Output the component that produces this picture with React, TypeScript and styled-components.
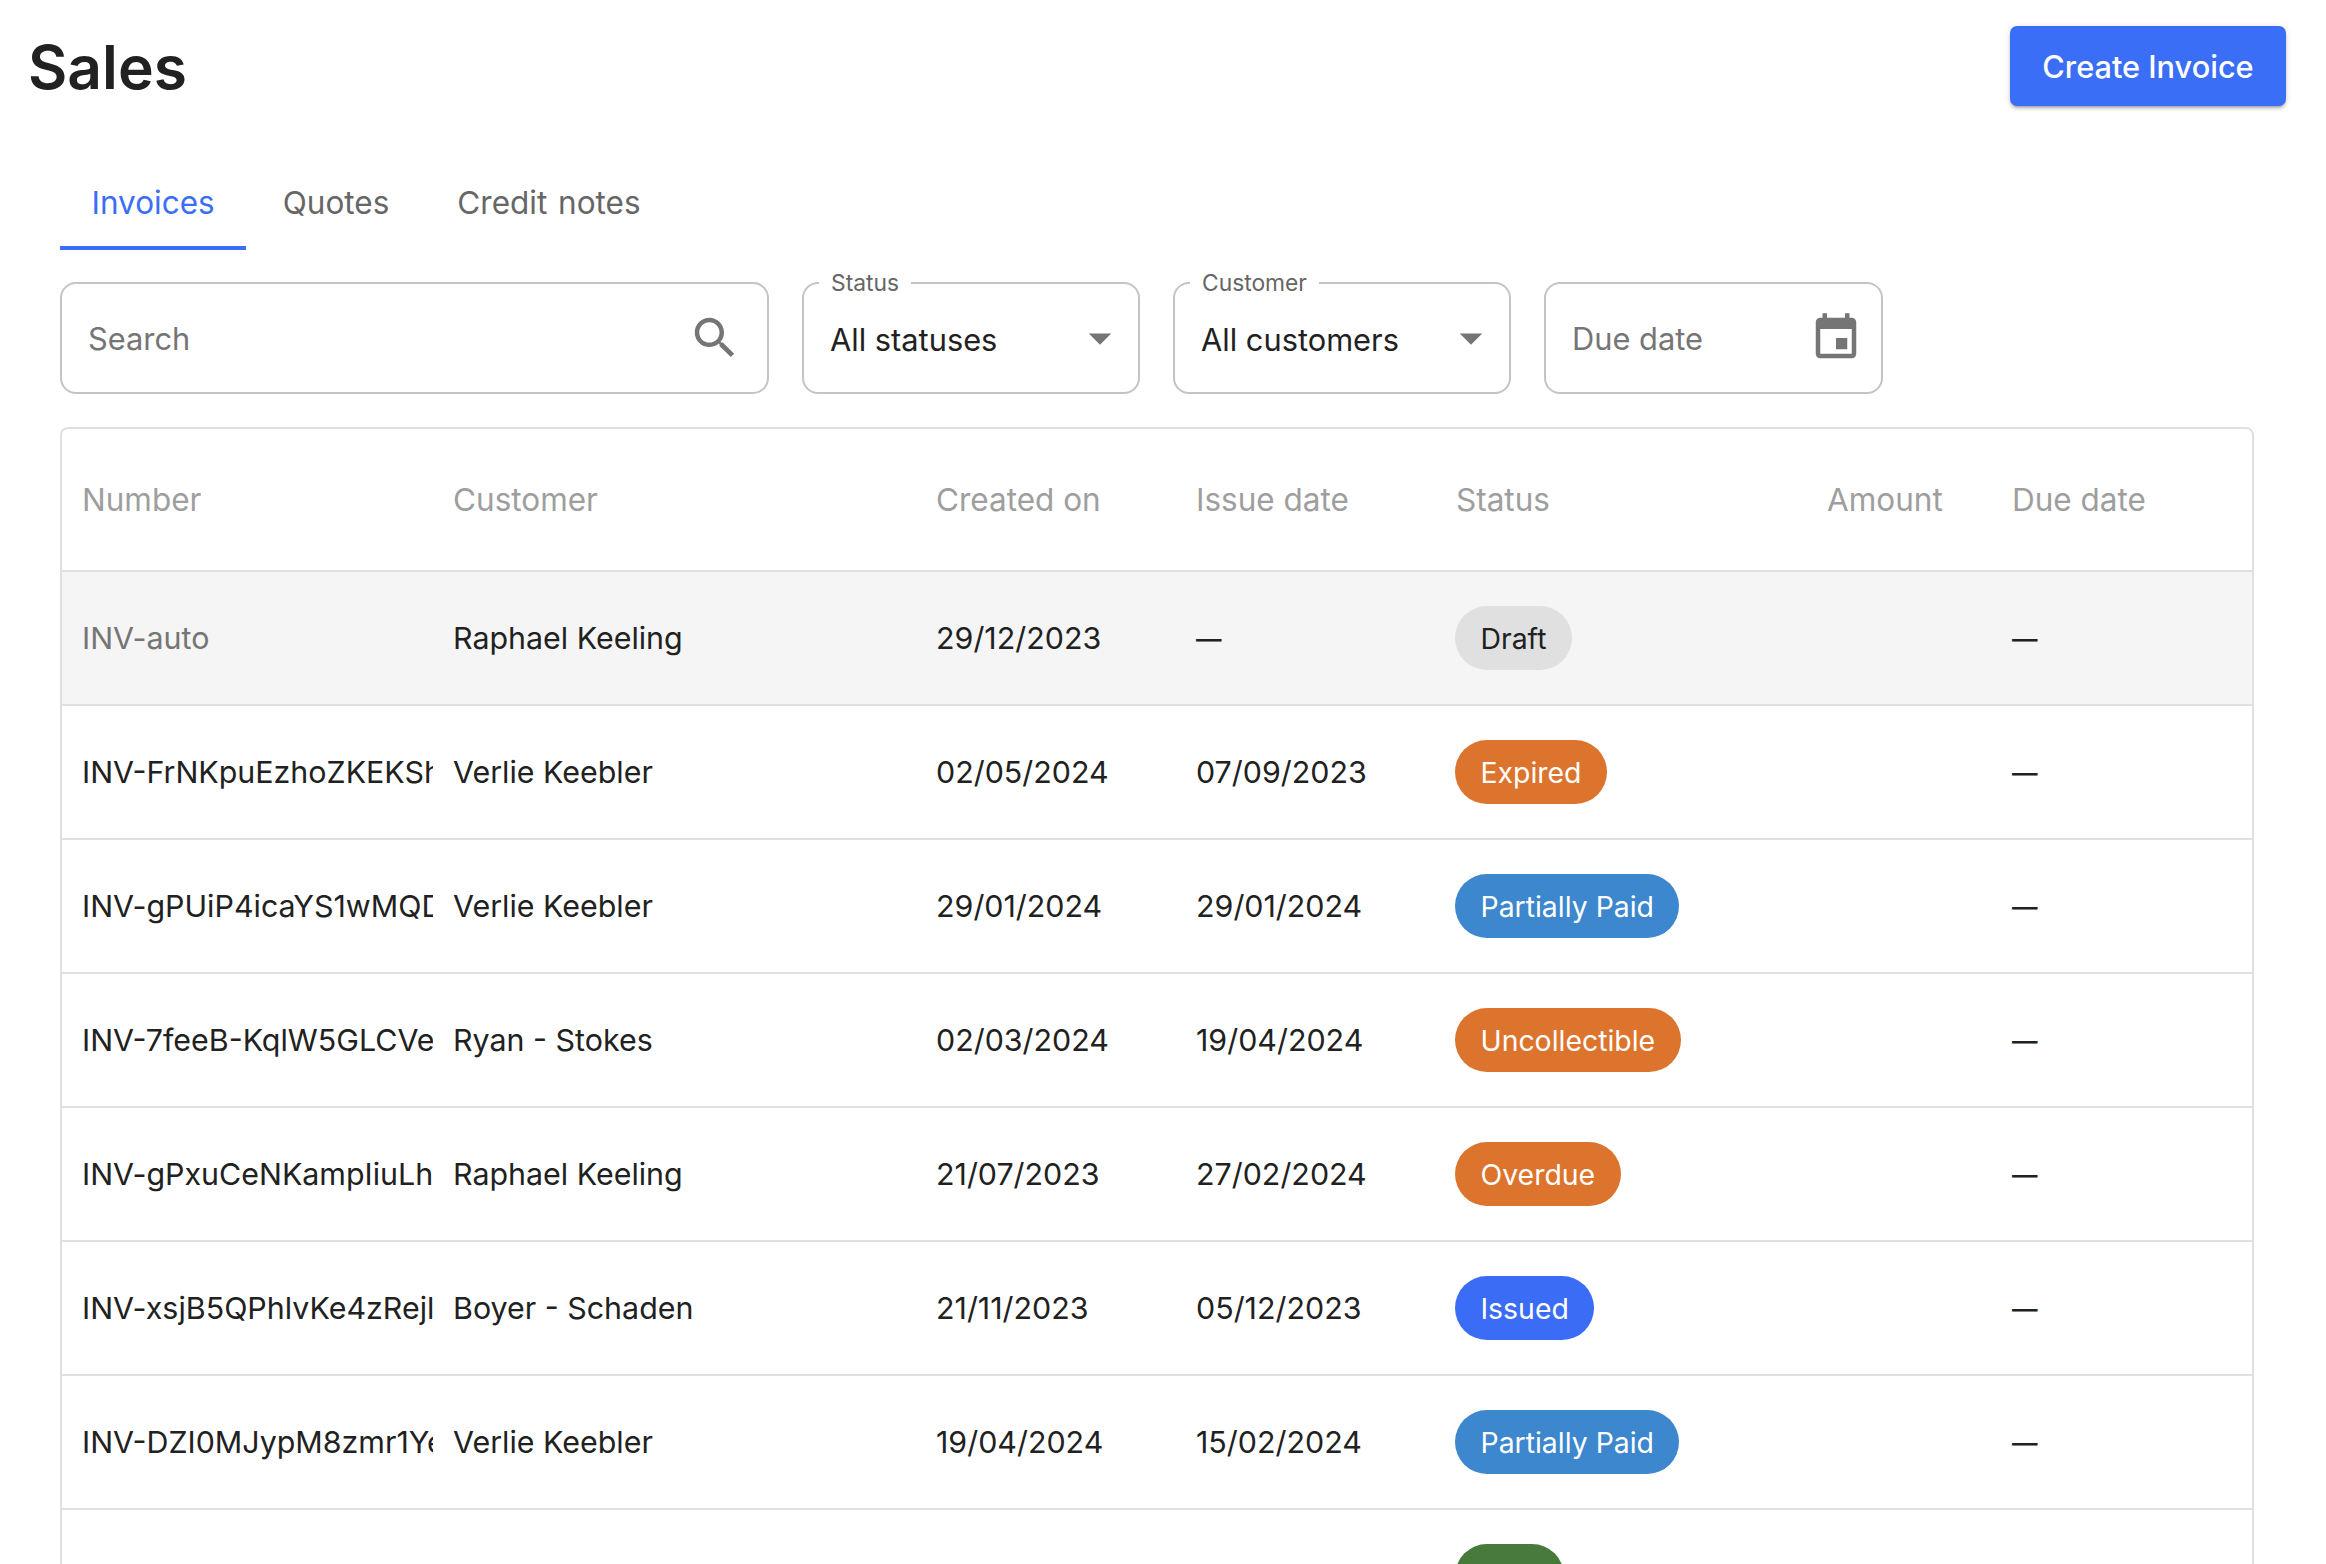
import styled, { createGlobalStyle } from 'styled-components';

type ChipTone = 'draft' | 'orange' | 'sky' | 'blue' | 'green';

interface Invoice {
	number: string;
	customer: string;
	created: string;
	issued: string;
	status: string;
	tone: ChipTone;
	draft?: boolean;
}

const invoices: Invoice[] = [
	{ number: 'INV-auto', customer: 'Raphael Keeling', created: '29/12/2023', issued: '—', status: 'Draft', tone: 'draft', draft: true },
	{ number: 'INV-FrNKpuEzhoZKEKShTq2', customer: 'Verlie Keebler', created: '02/05/2024', issued: '07/09/2023', status: 'Expired', tone: 'orange' },
	{ number: 'INV-gPUiP4icaYS1wMQDx7e', customer: 'Verlie Keebler', created: '29/01/2024', issued: '29/01/2024', status: 'Partially Paid', tone: 'sky' },
	{ number: 'INV-7feeB-KqlW5GLCVeHs1', customer: 'Ryan - Stokes', created: '02/03/2024', issued: '19/04/2024', status: 'Uncollectible', tone: 'orange' },
	{ number: 'INV-gPxuCeNKampIiuLh3Zo', customer: 'Raphael Keeling', created: '21/07/2023', issued: '27/02/2024', status: 'Overdue', tone: 'orange' },
	{ number: 'INV-xsjB5QPhlvKe4zRejlM', customer: 'Boyer - Schaden', created: '21/11/2023', issued: '05/12/2023', status: 'Issued', tone: 'blue' },
	{ number: 'INV-DZI0MJypM8zmr1YeWp9', customer: 'Verlie Keebler', created: '19/04/2024', issued: '15/02/2024', status: 'Partially Paid', tone: 'sky' },
	{ number: 'INV-qT3mVbN8sLc2XoRa5Kd', customer: 'Ryan - Stokes', created: '14/01/2024', issued: '18/03/2024', status: 'Paid', tone: 'green' },
];

const chipColors: Record<ChipTone, string> = {
	draft: 'background: #e0e0e0; color: #212121;',
	orange: 'background: #dd742e; color: #fff;',
	sky: 'background: #3c87cd; color: #fff;',
	blue: 'background: #3b6cf5; color: #fff;',
	green: 'background: #477a3b; color: #fff;',
};

const GlobalStyle = createGlobalStyle`
	html,
	body {
		margin: 0;
		height: 1564px;
		overflow: hidden;
		background: #fff;
		font-family: Inter, 'Liberation Sans', sans-serif;
		color: #212121;
	}
	* {
		box-sizing: border-box;
	}
`;

const PageHeader = styled.header`
	display: flex;
	justify-content: space-between;
	align-items: center;
	padding: 26px 40px 0 28px;
`;

const Title = styled.h1`
	margin: 0;
	height: 80px;
	padding-top: 1px;
	font-size: 60.5px;
	line-height: 80px;
	font-weight: 600;
	color: #212121;
`;

const CreateButton = styled.button`
	width: 276px;
	height: 80px;
	border: 0;
	border-radius: 7px;
	background: #3b6ef6;
	color: #fff;
	font: 500 30.7px Inter, sans-serif;
	box-shadow: 0 4px 2px -3px rgba(0, 0, 0, 0.2), 0 3px 3px rgba(0, 0, 0, 0.14), 0 1px 7px rgba(0, 0, 0, 0.12);
`;

const Content = styled.main`
	padding: 50px 72px 0 60px;
`;

const Tabs = styled.nav`
	display: flex;
	gap: 5px;
	height: 94px;
`;

const Tab = styled.div<{ $active?: boolean }>`
	display: flex;
	align-items: center;
	padding: 3px 31.5px 0;
	font-size: 31.5px;
	word-spacing: 2px;
	color: ${(p) => (p.$active ? '#3b6ef6' : '#666')};
	border-bottom: 4px solid ${(p) => (p.$active ? '#3b6ef6' : 'transparent')};
`;

const Filters = styled.div`
	display: flex;
	gap: 33px;
	margin-top: 32px;
`;

const Field = styled.div<{ $width: number }>`
	position: relative;
	display: flex;
	align-items: center;
	justify-content: space-between;
	width: ${(p) => p.$width}px;
	height: 112px;
	padding: 0 18px 0 26px;
	border: 2px solid #c4c4c4;
	border-radius: 16px;
	font-size: 30.8px;
`;

const Placeholder = styled.span`
	color: #757575;
`;

const Value = styled.span`
	color: #212121;
	padding-top: 2px;
`;

const FieldLabel = styled.label`
	position: absolute;
	top: -15px;
	left: 15px;
	padding: 0 12px;
	background: #fff;
	font-size: 22.8px;
	line-height: 27px;
	color: #666;
`;

const FieldIcon = styled.svg<{ $inset?: number }>`
	flex: none;
	width: 54px;
	height: 54px;
	fill: #757575;
	margin-right: ${(p) => p.$inset ?? 0}px;
`;

const Table = styled.section`
	margin-top: 33px;
	border: 2px solid #e0e0e0;
	border-radius: 8px 8px 0 0;
`;

const columns = '371px 483px 260px 260px 371px 185px 1fr';

const HeadRow = styled.div`
	display: grid;
	grid-template-columns: ${columns};
	align-items: center;
	height: 143px;
	border-bottom: 2px solid #e0e0e0;
`;

const HeadCell = styled.div`
	padding-left: 20px;
	font-size: 31.5px;
	color: #9e9e9e;
`;

const Row = styled.div<{ $draft?: boolean }>`
	display: grid;
	grid-template-columns: ${columns};
	align-items: center;
	height: 134px;
	border-bottom: 2px solid #e0e0e0;
	background: ${(p) => (p.$draft ? '#f5f5f5' : '#fff')};
`;

const Cell = styled.div`
	padding-left: 20px;
	font-size: 30.4px;
	color: #212121;
	white-space: nowrap;
	overflow: hidden;
`;

const NumberCell = styled(Cell)<{ $draft?: boolean }>`
	color: ${(p) => (p.$draft ? '#757575' : '#212121')};
`;

const DashCell = styled(Cell)`
	font-size: 25.5px;
	font-weight: 500;
`;

const StatusCell = styled(Cell)`
	padding-left: 19px;
`;

const Chip = styled.span<{ $tone: ChipTone }>`
	display: inline-flex;
	align-items: center;
	height: 64px;
	padding: 0 25.5px;
	border-radius: 32px;
	font-size: 28.4px;
	${(p) => chipColors[p.$tone]}
`;

export default function App() {
	return (
		<>
			<GlobalStyle />
			<PageHeader>
				<Title>Sales</Title>
				<CreateButton>Create Invoice</CreateButton>
			</PageHeader>
			<Content>
				<Tabs>
					<Tab $active>Invoices</Tab>
					<Tab>Quotes</Tab>
					<Tab>Credit notes</Tab>
				</Tabs>
				<Filters>
					<Field $width={709}>
						<Placeholder>Search</Placeholder>
						<FieldIcon viewBox="0 0 24 24" $inset={7}>
							<path d="M15.5 14h-.79l-.28-.27C15.41 12.59 16 11.11 16 9.5 16 5.91 13.09 3 9.5 3S3 5.91 3 9.5 5.91 16 9.5 16c1.61 0 3.09-.59 4.23-1.57l.27.28v.79l5 4.99L20.49 19l-4.99-5zm-6 0C7.01 14 5 11.99 5 9.5S7.01 5 9.5 5 14 7.01 14 9.5 11.99 14 9.5 14z" />
						</FieldIcon>
					</Field>
					<Field $width={338}>
						<FieldLabel>Status</FieldLabel>
						<Value>All statuses</Value>
						<FieldIcon viewBox="0 0 24 24" $inset={-7}>
							<path d="M7 10l5 5 5-5z" />
						</FieldIcon>
					</Field>
					<Field $width={338}>
						<FieldLabel>Customer</FieldLabel>
						<Value>All customers</Value>
						<FieldIcon viewBox="0 0 24 24" $inset={-7}>
							<path d="M7 10l5 5 5-5z" />
						</FieldIcon>
					</Field>
					<Field $width={339}>
						<Placeholder>Due date</Placeholder>
						<FieldIcon viewBox="0 0 24 24">
							<path d="M17 12h-5v5h5v-5zM16 1v2H8V1H6v2H5c-1.11 0-1.99.9-1.99 2L3 19c0 1.1.89 2 2 2h14c1.1 0 2-.9 2-2V5c0-1.1-.9-2-2-2h-1V1h-2zm3 18H5V8h14v11z" />
						</FieldIcon>
					</Field>
				</Filters>
				<Table>
					<HeadRow>
						<HeadCell>Number</HeadCell>
						<HeadCell>Customer</HeadCell>
						<HeadCell>Created on</HeadCell>
						<HeadCell>Issue date</HeadCell>
						<HeadCell>Status</HeadCell>
						<HeadCell>Amount</HeadCell>
						<HeadCell>Due date</HeadCell>
					</HeadRow>
					{invoices.map((invoice) => (
						<Row key={invoice.number} $draft={invoice.draft}>
							<NumberCell $draft={invoice.draft}>{invoice.number}</NumberCell>
							<Cell>{invoice.customer}</Cell>
							<Cell>{invoice.created}</Cell>
							{invoice.issued === '—' ? <DashCell>—</DashCell> : <Cell>{invoice.issued}</Cell>}
							<StatusCell>
								<Chip $tone={invoice.tone}>{invoice.status}</Chip>
							</StatusCell>
							<Cell />
							<DashCell>—</DashCell>
						</Row>
					))}
				</Table>
			</Content>
		</>
	);
}
